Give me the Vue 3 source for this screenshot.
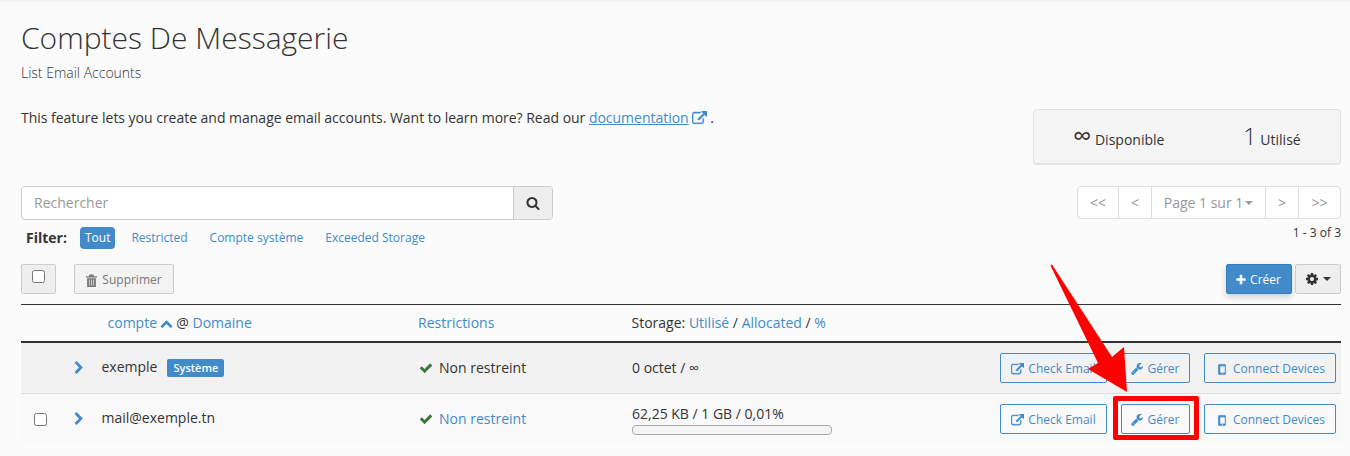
<script setup>
const icons = {
  search: 'M1216 832q0-185-131.500-316.500t-316.500-131.500-316.500 131.500-131.500 316.500 131.500 316.500 316.500 131.500 316.500-131.500 131.500-316.500zm512 832q0 52-38 90t-90 38q-54 0-90-38l-343-342q-179 124-399 124-143 0-273.500-55.500t-225-150-150-225-55.500-273.500 55.500-273.500 150-225 225-150 273.500-55.500 273.500 55.500 225 150 150 225 55.500 273.500q0 220-124 399l343 343q37 37 37 90z',
  ext: 'M1408 928v320q0 119-84.500 203.500t-203.500 84.500h-832q-119 0-203.500-84.500t-84.500-203.500v-832q0-119 84.500-203.500t203.500-84.500h704q14 0 23 9t9 23v64q0 14-9 23t-23 9h-704q-66 0-113 47t-47 113v832q0 66 47 113t113 47h832q66 0 113-47t47-113v-320q0-14 9-23t23-9h64q14 0 23 9t9 23zm384-864v512q0 26-19 45t-45 19-45-19l-176-176-652 652q-10 10-23 10t-23-10l-114-114q-10-10-10-23t10-23l652-652-176-176q-19-19-19-45t19-45 45-19h512q26 0 45 19t19 45z',
  wrench: 'M384 1344q0-26-19-45t-45-19-45 19-19 45 19 45 45 19 45-19 19-45zm644-420l-682 682q-37 37-90 37-52 0-91-37l-106-108q-38-36-38-90 0-53 38-91l681-681q39 98 114.500 173.500t173.500 114.500zm634-435q0 39-23 106-47 134-164.500 217.500t-258.500 83.500q-185 0-316.500-131.500t-131.500-316.500 131.500-316.500 316.500-131.500q58 0 121.500 16.500t107.500 46.500q16 11 16 28t-16 28l-293 169v224l193 107q5-3 79-48.500t135.500-81 70.500-35.500q15 0 23.500 10t8.500 25z',
  mobile: 'M976 1408q0-33-23.500-56.500t-56.500-23.500-56.500 23.500-23.500 56.500 23.500 56.500 56.500 23.500 56.500-23.500 23.500-56.500zm208-160v-704q0-13-9.500-22.500t-22.500-9.500h-512q-13 0-22.500 9.500t-9.500 22.500v704q0 13 9.500 22.500t22.500 9.500h512q13 0 22.500-9.500t9.500-22.500zm-192-848q0-16-16-16h-160q-16 0-16 16t16 16h160q16 0 16-16zm288-16v1024q0 52-38 90t-90 38h-640q-52 0-90-38t-38-90v-1024q0-52 38-90t90-38h640q52 0 90 38t38 90z',
  gear: 'M1152 896q0-106-75-181t-181-75-181 75-75 181 75 181 181 75 181-75 75-181zm512-109v222q0 12-8 23t-20 13l-185 28q-19 54-39 91 35 50 107 138 10 12 10 25t-9 23q-27 37-99 108t-94 71q-12 0-26-9l-138-108q-44 23-91 38-16 136-29 186-7 28-36 28h-222q-14 0-24.500-8.500t-11.500-21.500l-28-184q-49-16-90-37l-141 107q-10 9-25 9-14 0-25-11-126-114-165-168-7-10-7-23 0-12 8-23 15-21 51-66.500t54-70.500q-27-50-41-99l-183-27q-13-2-21-12.500t-8-23.500v-222q0-12 8-23t19-13l186-28q14-46 39-92-40-57-107-138-10-12-10-24 0-10 9-23 26-36 98.500-107.500t94.500-71.500q13 0 26 10l138 107q44-23 91-38 16-136 29-186 7-28 36-28h222q14 0 24.500 8.500t11.500 21.500l28 184q49 16 90 37l142-107q9-9 24-9 13 0 25 10 129 119 165 170 7 8 7 22 0 12-8 23-15 21-51 66.500t-54 70.500q26 50 41 98l183 28q13 2 21 12.500t8 23.500z',
  plus: 'M1600 736v192q0 40-28 68t-68 28h-416v416q0 40-28 68t-68 28h-192q-40 0-68-28t-28-68v-416h-416q-40 0-68-28t-28-68v-192q0-40 28-68t68-28h416v-416q0-40 28-68t68-28h192q40 0 68 28t28 68v416h416q40 0 68 28t28 68z',
  check: 'M1671 566q0 40-28 68l-724 724-136 136q-28 28-68 28t-68-28l-136-136-362-362q-28-28-28-68t28-68l136-136q28-28 68-28t68 28l294 295 656-657q28-28 68-28t68 28l136 136q28 28 28 68z',
  right: 'M1363 877l-742 742q-19 19-45 19t-45-19l-166-166q-19-19-19-45t19-45l531-531-531-531q-19-19-19-45t19-45l166-166q19-19 45-19t45 19l742 742q19 19 19 45t-19 45z',
  up: 'M1683 1331l-166 165q-19 19-45 19t-45-19l-531-531-531 531q-19 19-45 19t-45-19l-166-165q-19-19-19-45.500t19-45.500l742-741q19-19 45-19t45 19l742 741q19 19 19 45.500t-19 45.500z',
}
const filters = ['Restricted', 'Compte système', 'Exceeded Storage']
const rows = [
  { id: 1, shaded: true, name: 'exemple', badge: 'Système', link: false, storage: '0 octet / ∞' },
  { id: 2, shaded: false, name: 'mail@exemple.tn', link: true, used: '62,25 KB / 1 GB / 0,01%' },
]
</script>

<template>
  <div class="page">
    <div class="topline"></div>
    <h1>Comptes De Messagerie</h1>
    <p class="sub">List Email Accounts</p>
    <div class="intro">
      <p class="desc">This feature lets you create and manage email accounts. Want to learn more? Read our <a class="u">documentation</a><svg class="fa bold ext-doc" viewBox="0 0 1792 1792"><path :d="icons.ext"/></svg> .</p>
      <div class="stats">
        <span class="stat"><span class="big inf">∞</span> Disponible</span>
        <span class="stat"><span class="big">1</span> Utilisé</span>
      </div>
    </div>

    <div class="controls">
      <div class="left">
        <div class="search">
          <span class="ph">Rechercher</span>
          <span class="sbtn"><svg class="fa s14 dark" viewBox="0 0 1792 1792"><path :d="icons.search"/></svg></span>
        </div>
        <div class="filters">
          <b>Filter:</b>
          <span class="pill">Tout</span>
          <a v-for="f in filters" :key="f">{{ f }}</a>
        </div>
      </div>
      <div class="right">
        <div class="pager">
          <span class="pg w40">&lt;&lt;</span>
          <span class="pg w33">&lt;</span>
          <span class="pg w114">Page 1 sur 1<i class="caret"></i></span>
          <span class="pg w33">&gt;</span>
          <span class="pg w42">&gt;&gt;</span>
        </div>
        <div class="count">1 - 3 of 3</div>
      </div>
    </div>

    <div class="toolbar">
      <span class="chk-btn"><i class="box"></i></span>
      <span class="del"><svg viewBox="0 0 12 14" width="11" height="13"><path d="M0 2.300h12v1.400H0zM3.500.500h5v2h-5zM1.200 4.500h9.600V14H1.200z" fill="#777"/><path d="M3.700 6v6.500M6 6v6.500M8.300 6v6.500" stroke="#f3f3f3" stroke-width=".8"/></svg>Supprimer</span>
      <span class="grow"></span>
      <span class="create"><svg class="fa s12" viewBox="0 0 1792 1792"><path :d="icons.plus"/></svg>Créer</span>
      <span class="gear"><svg class="fa s14 dark" viewBox="0 0 1792 1792"><path :d="icons.gear"/></svg><i class="caret dark-caret"></i></span>
    </div>

    <div class="thead">
      <span class="th-acc"><a>compte</a> <svg class="fa up" viewBox="0 0 1792 1792"><path :d="icons.up"/></svg> @ <a>Domaine</a></span>
      <span class="th-res"><a>Restrictions</a></span>
      <span>Storage: <a>Utilisé</a> / <a>Allocated</a> / <a>%</a></span>
    </div>

    <div v-for="r in rows" :key="r.id" class="tr" :class="{ shaded: r.shaded }">
      <span class="c-check"><i v-if="!r.shaded" class="box"></i></span>
      <svg class="fa chev" viewBox="0 0 1792 1792"><path :d="icons.right"/></svg>
      <span class="acc">{{ r.name }}<span v-if="r.badge" class="badge">{{ r.badge }}</span></span>
      <span class="st"><svg class="fa s14 ok" viewBox="0 0 1792 1792"><path :d="icons.check"/></svg><a v-if="r.link">Non restreint</a><template v-else>Non restreint</template></span>
      <span class="storage">
        <span v-if="r.storage">{{ r.storage }}</span>
        <template v-else>
          <span class="used">{{ r.used }}</span>
          <span class="bar"></span>
        </template>
      </span>
      <span class="acts">
        <span class="btn ce"><svg class="fa bold s13" viewBox="0 0 1792 1792"><path :d="icons.ext"/></svg>Check Email</span>
        <span class="btn ge"><svg class="fa s13" viewBox="0 0 1792 1792"><path :d="icons.wrench"/></svg>Gérer</span>
        <span class="btn cd"><svg class="fa thin s15" viewBox="0 0 1792 1792"><path :d="icons.mobile"/></svg>Connect Devices</span>
      </span>
    </div>

    <div class="hl"></div>
    <svg class="arrow" viewBox="0 0 1350 456" width="1350" height="456"><path d="M1050.500 265.500L1052 264.500 1112 357 1124 347 1127 392 1088 369 1098 363z" fill="#ff0000"/></svg>
  </div>
</template>

<style>
html, body { margin: 0; background: #fbfbfb; }
</style>

<style scoped>
.page { position: relative; width: 1350px; height: 456px; overflow: hidden; box-sizing: border-box; padding: 21px 9px 0 21px; background: #fbfbfb; font: 14px/20px "Open Sans", sans-serif; color: #333; }
.topline { position: absolute; left: 0; right: 0; top: 0; height: 2px; background: #f4f4f4; }
h1 { margin: 0; font-weight: 300; font-size: 30px; line-height: 34px; }
.sub { margin: 8px 0 0; font-weight: 300; height: 20px; line-height: 20px; }
.intro { display: flex; justify-content: space-between; align-items: flex-start; margin-top: 24px; height: 69px; }
.desc { margin: 1px 0 0; letter-spacing: -.02px; }
a { color: #428bca; }
.u { text-decoration: underline; }
.fa { fill: currentColor; flex: none; }
.bold { stroke: currentColor; stroke-width: 60; }
.thin { stroke: currentColor; stroke-width: 24; }
.s12 { width: 12px; height: 12px; }
.s13 { width: 13px; height: 13px; }
.s14 { width: 14px; height: 14px; }
.s15 { width: 15px; height: 15px; }
.dark { color: #333; }
.ext-doc { width: 15px; height: 15px; color: #428bca; margin-left: 3px; vertical-align: -3px; }
.stats { box-sizing: border-box; width: 308px; height: 56px; margin-top: 2px; padding: 2px 0 0 39px; background: #f5f5f5; border: 1px solid #e3e3e3; border-bottom-width: 2px; border-radius: 4px; display: flex; align-items: center; }
.stat { flex: none; width: 170px; white-space: nowrap; }
.big { font-size: 24px; font-weight: 300; }
.inf { font-size: 26px; font-weight: 400; line-height: 20px; }
.controls { display: flex; justify-content: space-between; margin-top: 10px; height: 78px; }
.search { display: flex; width: 532px; height: 34px; box-sizing: border-box; border: 1px solid #ccc; border-radius: 4px; background: #fff; }
.ph { flex: 1; padding: 6px 12px; color: #999; }
.sbtn { box-sizing: border-box; width: 39px; background: #eee; border-left: 1px solid #ccc; display: flex; align-items: center; justify-content: center; border-radius: 0 3px 3px 0; }
.filters { display: flex; align-items: center; margin: 6px 0 0 5px; font-size: 12px; height: 23px; }
.filters b { font-size: 14px; font-weight: 700; margin-right: 13px; }
.pill { background: #428bca; color: #fff; border-radius: 4px; padding: 0 5px; line-height: 22px; margin-right: 16px; }
.filters a { margin-right: 22px; }
.right { display: flex; flex-direction: column; align-items: flex-end; }
.pager { display: flex; height: 33px; box-sizing: border-box; border: 1px solid #ddd; border-radius: 4px; background: #fff; color: #999; }
.pg { display: flex; align-items: center; justify-content: center; box-sizing: border-box; border-left: 1px solid #ddd; }
.pg:first-child { border-left: 0; }
.w40 { width: 40px; } .w33 { width: 33px; } .w42 { width: 42px; } .w114 { width: 114px; }
.caret { display: inline-block; width: 0; height: 0; border: 4px solid transparent; border-top-color: #999; border-bottom: 0; margin-left: 2px; }
.dark-caret { border-top-color: #333; margin-left: 4px; }
.count { font-size: 12px; line-height: 18px; margin-top: 5px; }
.toolbar { display: flex; align-items: center; height: 30px; }
.chk-btn { box-sizing: border-box; width: 35px; height: 30px; background: #eee; border: 1px solid #ccc; border-radius: 2px; padding: 5px 0 0 10px; }
.box { display: block; box-sizing: border-box; width: 13px; height: 13px; border: 1px solid #767676; border-radius: 2.500px; background: #fff; }
.del { box-sizing: border-box; height: 30px; width: 100px; margin-left: 18px; padding-top: 2px; background: #f3f3f3; border: 1px solid #ccc; border-radius: 2px; color: #777; font-size: 12px; display: flex; align-items: center; justify-content: center; gap: 5px; }
.grow { flex: 1; }
.create { box-sizing: border-box; width: 66px; height: 30px; padding: 2px 2px 0 0; background: #428bca; border: 1px solid #357ebd; border-radius: 2px; color: #fff; font-size: 12px; display: flex; align-items: center; justify-content: center; gap: 3px; box-shadow: 0 3px 6px rgba(0,0,0,.18); }
.gear { box-sizing: border-box; width: 46px; height: 30px; margin-left: 3px; background: #eee; border: 1px solid #ccc; border-radius: 2px; display: flex; align-items: center; justify-content: center; }
.thead { display: flex; align-items: center; margin-top: 10px; height: 39px; box-sizing: border-box; border-top: 1px solid #333; border-bottom: 2px solid #333; width: 1320px; padding-left: 86.500px; white-space: pre; }
.th-acc { width: 310.500px; }
.th-acc .up { color: #428bca; width: 13px; height: 13px; margin: 0 -.5px; vertical-align: -2px; }
.th-res { width: 213.500px; }
.tr { display: flex; align-items: center; width: 1320px; height: 50px; box-sizing: border-box; background: #f9f9f9; }
.tr.shaded { background: #f2f2f2; border-bottom: 1px solid #ddd; height: 51px; }
.c-check { width: 51px; padding-left: 13px; box-sizing: border-box; flex: none; }
.chev { width: 14px; height: 14px; color: #428bca; flex: none; }
.acc { flex: none; width: 333px; padding: 0 0 2px 15.500px; box-sizing: border-box; white-space: nowrap; }
.badge { display: inline-block; background: #428bca; color: #fff; font-size: 11px; font-weight: 600; line-height: 18px; padding: 0 6px; border-radius: 2px; margin-left: 10px; }
.st { flex: none; width: 213px; display: flex; align-items: center; gap: 6px; white-space: nowrap; }
.ok { color: #3c763d; }
.storage { flex: 1; display: flex; flex-direction: column; }
.used { line-height: 19px; margin-top: 1px; }
.bar { display: block; box-sizing: border-box; width: 200px; height: 10px; background: #f5f5f5; border: 1px solid #aaa; border-radius: 4px; margin-top: 2px; }
.acts { display: flex; padding-right: 5px; }
.btn { box-sizing: border-box; height: 30px; padding-top: 2px; border: 1px solid #428bca; border-radius: 2px; color: #428bca; font-size: 12px; display: flex; align-items: center; justify-content: center; gap: 4px; white-space: nowrap; }
.ce { width: 107px; } .ge { width: 69px; margin-left: 14px; gap: 3px; } .cd { width: 132px; margin-left: 14px; gap: 3px; }
.hl { position: absolute; left: 1113px; top: 396px; width: 86px; height: 44px; box-sizing: border-box; border: 5px solid #f00; border-radius: 2px; }
.arrow { position: absolute; left: 0; top: 0; pointer-events: none; }
</style>
